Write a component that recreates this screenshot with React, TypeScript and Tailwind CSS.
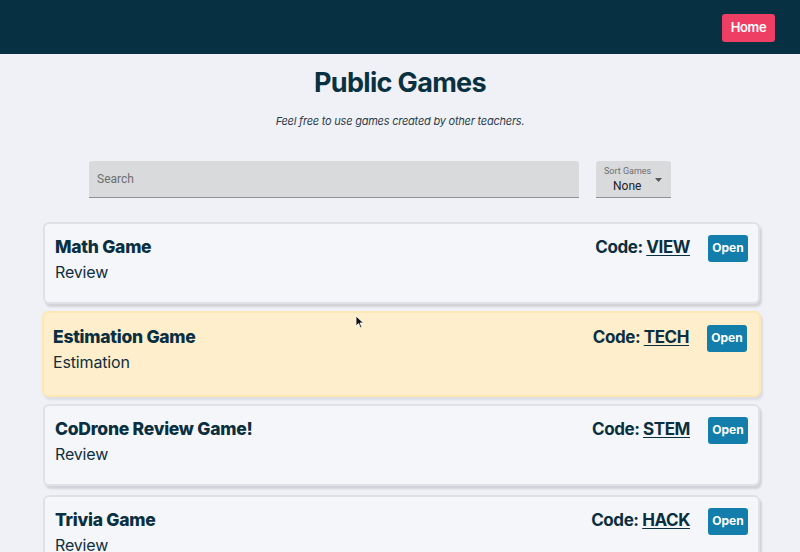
import React from "react";

interface Game {
  title: string;
  category: string;
  code: string;
}

const games: Game[] = [
  { title: "Math Game", category: "Review", code: "VIEW" },
  { title: "Estimation Game", category: "Estimation", code: "TECH" },
  { title: "CoDrone Review Game!", category: "Review", code: "STEM" },
  { title: "Trivia Game", category: "Review", code: "HACK" },
];

const GameCard: React.FC<{ game: Game; hovered?: boolean }> = ({ game, hovered }) => {
  return (
    <div
      className={
        hovered
          ? "relative -mx-px -my-[2px] flex h-[86px] items-start justify-between rounded-md border-2 border-[#fde7b3] bg-[#feeecb] pl-[9px] pr-[12px] pt-[12px] shadow-[2px_3px_2px_rgba(0,0,0,0.08)]"
          : "flex h-[82px] items-start justify-between rounded-md border-2 border-[#dfe1e6] bg-[#f5f6fa] px-[10px] pt-[11px] shadow-[2px_3px_2px_rgba(0,0,0,0.12)]"
      }
    >
      <div>
        <div className="text-[17.5px] leading-[24px] font-extrabold tracking-[-0.015em] text-[#0a2f40]">{game.title}</div>
        <div className="mt-px text-[16px] leading-[24px] tracking-[-0.01em] text-[#0f2f3e]">{game.category}</div>
      </div>
      <div className="flex items-center gap-[18px]">
        <div className="text-[17px] font-bold tracking-tight text-[#0a2f40]">
          Code: <span className="underline underline-offset-2">{game.code}</span>
        </div>
        <button className="h-[27px] w-[40px] rounded-[3px] bg-[#137dab] text-[12px] font-bold text-white">
          Open
        </button>
      </div>
    </div>
  );
};

export default function App() {
  return (
    <div
      className="relative h-[552px] w-[800px] overflow-hidden bg-[#f0f1f6]"
      style={{ fontFamily: "Inter, 'Noto Sans', sans-serif" }}
    >
      <header className="flex h-[54px] items-center justify-end bg-[#073142] pr-[25px]">
        <button className="mt-px h-[28px] w-[53px] rounded-[3px] bg-[#ee3e63] text-[13px] font-semibold tracking-tight text-white">
          Home
        </button>
      </header>

      <h1 className="mt-[12px] text-center text-[27px] leading-[34px] font-bold tracking-tight text-[#0a3142]">
        Public Games
      </h1>
      <p className="mt-[13px] text-center text-[11px] italic tracking-[-0.02em] text-[#2a3c4a]">
        Feel free to use games created by other teachers.
      </p>

      <div className="mt-[31px] flex gap-[17px] pl-[89px]" style={{ fontFamily: "Roboto, sans-serif" }}>
        <div className="flex h-[37px] w-[490px] items-center rounded-t-[3px] border-b border-[#8e9196] bg-[#d9dadc] px-[8px] text-[12px] text-[#6d6e70]">
          Search
        </div>
        <div className="relative flex h-[37px] w-[75px] flex-col rounded-t-[3px] border-b border-[#8e9196] bg-[#d9dadc] pl-[8px] pt-[5px]">
          <span className="text-[9px] leading-[10px] text-[#6d6e70]">Sort Games</span>
          <span className="mt-[3px] pl-[9px] text-[12px] leading-[14px] text-[#222]">None</span>
          <svg className="absolute right-[9px] top-[17px]" width="7" height="4" viewBox="0 0 7 4">
            <path d="M0 0 L7 0 L3.5 4 Z" fill="#555" />
          </svg>
        </div>
      </div>

      <div className="mt-[24px] flex flex-col gap-[9px] pl-[43px] pr-[40px]">
        {games.map((g, i) => (
          <GameCard key={g.code} game={g} hovered={i === 1} />
        ))}
      </div>

      <svg className="absolute left-[355px] top-[315px]" width="10" height="14" viewBox="0 0 10 14">
        <path d="M1 1 L1 11 L3.5 8.5 L5.5 13 L7 12.3 L5 8 L8.5 8 Z" fill="#111" stroke="#fff" strokeWidth="0.8" />
      </svg>
    </div>
  );
}
